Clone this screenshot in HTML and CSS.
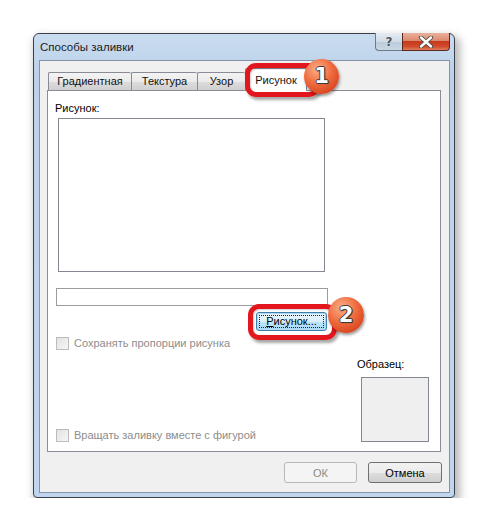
FILE: index.html
```html
<!DOCTYPE html>
<html>
<head>
    <title>Способы заливки</title>
    <link rel="stylesheet" href="styles.css">
</head>
<body>
    <div class="window">
        <div class="titlebar">
            <span class="title">Способы заливки</span>
            <div class="caption-btns">
                <span class="cap help">?</span>
                <span class="cap close">
                    <svg width="16" height="12" viewBox="0 0 16 12">
                        <path d="M3 1.5 L13 10.5 M13 1.5 L3 10.5" stroke="#4a4a4a" stroke-width="4.2" stroke-linecap="round"/>
                        <path d="M3 1.5 L13 10.5 M13 1.5 L3 10.5" stroke="#fff" stroke-width="2.4" stroke-linecap="round"/>
                    </svg>
                </span>
            </div>
        </div>

        <div class="client">
            <div class="tabs">
                <span class="tab t-grad">Градиентная</span>
                <span class="tab t-tex">Текстура</span>
                <span class="tab t-pat">Узор</span>
                <span class="tab active">Рисунок</span>
            </div>

            <div class="panel">
                <div class="label pic-label">Рисунок:</div>
                <div class="picbox"></div>
                <div class="filename"></div>
                <div class="btn-row">
                    <span class="btn focused"><span class="focus-rect"><u>Р</u>исунок...</span></span>
                </div>
                <div class="check disabled">
                    <span class="box"></span>
                    <span>Сохранять пропорции рисунка</span>
                </div>
                <div class="bottom-row">
                    <div class="check disabled">
                        <span class="box"></span>
                        <span>Вращать заливку вместе с фигурой</span>
                    </div>
                    <div class="sample">
                        <div class="label">Образец:</div>
                        <div class="sample-box"></div>
                    </div>
                </div>
            </div>

            <div class="actions">
                <span class="btn btn-ok disabled">ОК</span>
                <span class="btn btn-cancel">Отмена</span>
            </div>
        </div>

        <!-- callout marks over the screenshot -->
        <div class="mark mark-tab"></div>
        <div class="badge badge-1">1</div>
        <div class="mark mark-btn"></div>
        <div class="badge badge-2">2</div>
    </div>
</body>
</html>
```

FILE: styles.css
```css
body { margin: 0; background: #fff; font-family: "Liberation Sans", Arial, sans-serif; font-size: 11px; color: #000; }

.window { position: relative; box-sizing: border-box; width: 422px; height: 465px; margin: 33px 0 0 33px; padding: 0 4px 4px 5px; border: 1px solid #3b4048; border-radius: 6px 6px 4px 4px; background: linear-gradient(#c9dbef, #bcd2ea 40px, #c0d6ee); box-shadow: 3px 5px 9px 2px rgba(0,0,0,0.28); }

.titlebar { display: flex; justify-content: space-between; align-items: flex-start; height: 26px; }
.title { margin-left: 1px; line-height: 26px; font-size: 11.5px; color: #1b1b1b; }
.caption-btns { display: flex; margin-top: -1px; }
.cap { display: flex; align-items: center; justify-content: center; box-sizing: border-box; height: 18px; border: 1px solid #6c7a8c; border-top: none; }
.help { width: 27px; border-radius: 0 0 0 4px; border-right: none; background: linear-gradient(#e4ebf3, #d0dbe7 50%, #bccbdb 51%, #c9d6e4); color: #4d5560; font-family: "DejaVu Sans", sans-serif; font-weight: bold; font-size: 12px; text-shadow: 0 0 1px #fff; }
.close { width: 48px; border-radius: 0 0 4px 0; border-color: #5a2a24; background: linear-gradient(#e9b09c, #dc8a6f 45%, #c7381c 50%, #d04c2c 80%, #e0805c); }

.client { box-sizing: border-box; width: 411px; height: 433px; padding: 11px 7px 0 7px; border: 1px solid #8494a8; background: #f0f0f0; }

.tabs { display: flex; align-items: flex-end; height: 18px; padding-left: 1px; }
.tab { box-sizing: border-box; height: 18px; line-height: 16px; text-align: center; border: 1px solid #898c95; border-bottom: none; border-right: none; border-radius: 2px 2px 0 0; background: linear-gradient(#f3f3f3, #ebebeb 50%, #dddddd 51%, #cfcfcf); color: #111; }
.t-grad { width: 83px; }
.t-tex { width: 66px; }
.t-pat { width: 48px; }
.tab.active { position: relative; z-index: 1; width: 62px; height: 23px; margin-bottom: -1px; line-height: 22px; border-right: 1px solid #898c95; background: #fff; }

.panel { display: flex; flex-direction: column; box-sizing: border-box; width: 394px; height: 362px; padding: 10px 10px 9px 8px; border: 1px solid #898c95; background: #fff; }
.label { line-height: 15px; }
.pic-label { margin-left: -1px; }
.picbox { box-sizing: border-box; width: 267px; height: 154px; margin: 2px 0 0 2px; border: 1px solid #828790; background: #fff; }
.filename { box-sizing: border-box; width: 272px; height: 18px; margin-top: 16px; border: 1px solid #9a9ca1; background: #fff; }
.btn-row { display: flex; justify-content: flex-end; width: 271px; margin-top: 6px; }

.btn { display: flex; align-items: center; justify-content: center; box-sizing: border-box; border: 1px solid #707070; border-radius: 3px; background: linear-gradient(#f2f2f2, #ebebeb 50%, #dddddd 51%, #cfcfcf); color: #000; }
.btn.focused { width: 71px; height: 19px; padding: 2px; border-color: #3c7fb1; box-shadow: inset 0 0 0 1px #b2d8f1; background: linear-gradient(#eaf6fd, #d9f0fc 50%, #bee6fd 51%, #a7d9f5); }
.focus-rect { display: block; flex: 1; align-self: stretch; line-height: 13px; text-align: center; outline: 1px dotted #222; outline-offset: -1px; }

.check { display: flex; align-items: center; gap: 5px; line-height: 13px; }
.check .box { box-sizing: border-box; width: 13px; height: 13px; border: 1px solid #bcbcbc; background: linear-gradient(135deg, #e2e2e2, #f6f6f6); }
.check.disabled { color: #8d8d8d; }
.panel > .check { margin-top: 6px; }

.bottom-row { display: flex; justify-content: space-between; align-items: flex-end; margin-top: auto; }
.sample { margin-right: 1px; }
.sample .label { margin-bottom: 5px; }
.sample-box { box-sizing: border-box; width: 68px; height: 65px; margin-left: 4px; border: 1px solid #828790; background: #efefef; }

.actions { display: flex; justify-content: flex-end; gap: 11px; margin-top: 10px; }
.btn-ok, .btn-cancel { height: 21px; }
.btn-ok { width: 73px; }
.btn-cancel { width: 74px; }
.btn.disabled { border-color: #b5b9bd; background: #f4f4f4; color: #8a8a8a; }

.mark { position: absolute; box-sizing: border-box; border: 5px solid #e3161e; border-radius: 11px; box-shadow: 2px 3px 3px rgba(0,0,0,0.35), inset 1px 1px 2px rgba(0,0,0,0.2); }
.mark-tab { left: 211px; top: 29px; width: 75px; height: 34px; z-index: 2; }
.mark-btn { left: 214px; top: 270px; width: 89px; height: 36px; }

.badge { position: absolute; z-index: 3; width: 35px; height: 35px; border-radius: 50%; background: radial-gradient(circle at 38% 30%, #fbb08a, #ef6a3c 45%, #d2401c 85%); box-shadow: 1px 2px 3px rgba(0,0,0,0.4); color: #fff; font-family: "DejaVu Sans", sans-serif; font-weight: bold; font-size: 21px; line-height: 35px; text-align: center; text-shadow: 1px 0 0 #3a3a3a, -1px 0 0 #3a3a3a, 0 1px 0 #3a3a3a, 0 -1px 0 #3a3a3a, 1px 1px 1px #333; }
.badge-1 { left: 270px; top: 25px; }
.badge-2 { left: 294px; top: 263px; width: 36px; height: 36px; line-height: 36px; }
```
